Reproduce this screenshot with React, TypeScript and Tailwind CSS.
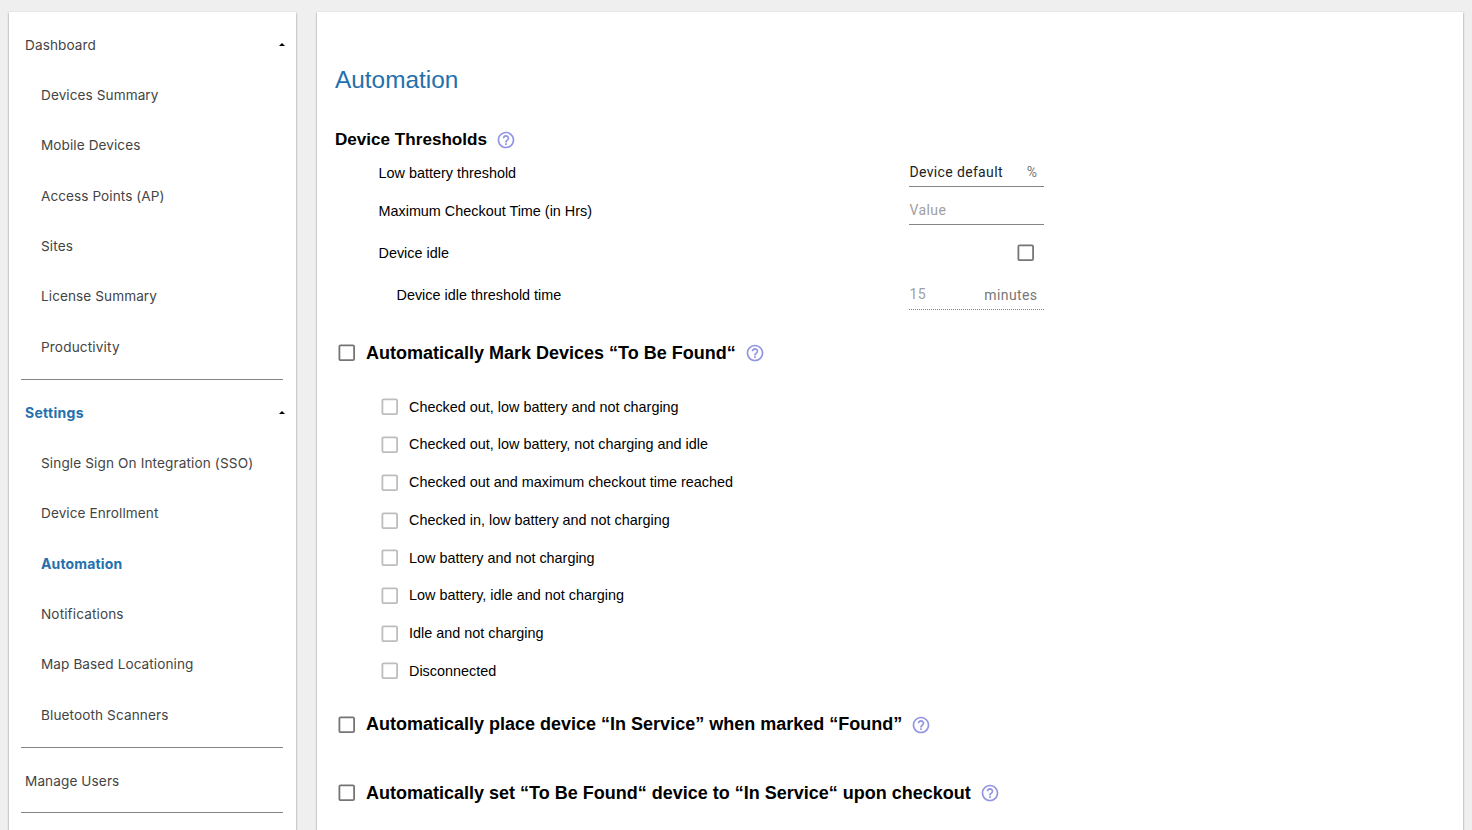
import type { ReactNode } from "react";
import { MdHelpOutline } from "react-icons/md";

type NavItem = { label: string; spacing: string; active?: boolean };

const dashboardItems: NavItem[] = [
  { label: "Devices Summary", spacing: "tracking-[0.08px]" },
  { label: "Mobile Devices", spacing: "tracking-[0.08px]" },
  { label: "Access Points (AP)", spacing: "tracking-[0.06px]" },
  { label: "Sites", spacing: "tracking-[0.1px]" },
  { label: "License Summary", spacing: "tracking-[0.08px]" },
  { label: "Productivity", spacing: "tracking-[0.15px]" },
];

const settingsItems: NavItem[] = [
  { label: "Single Sign On Integration (SSO)", spacing: "tracking-[0.12px]" },
  { label: "Device Enrollment", spacing: "tracking-[0.08px]" },
  { label: "Automation", spacing: "tracking-[0.15px]", active: true },
  { label: "Notifications", spacing: "tracking-[0.12px]" },
  { label: "Map Based Locationing", spacing: "tracking-[0.08px]" },
  { label: "Bluetooth Scanners", spacing: "tracking-[0.1px]" },
];

const conditions = [
  "Checked out, low battery and not charging",
  "Checked out, low battery, not charging and idle",
  "Checked out and maximum checkout time reached",
  "Checked in, low battery and not charging",
  "Low battery and not charging",
  "Low battery, idle and not charging",
  "Idle and not charging",
  "Disconnected",
];

function Caret() {
  return (
    <svg className="h-[3px] w-[6px]" viewBox="0 0 6 3">
      <path d="M3 0 6 3H0z" fill="#000" />
    </svg>
  );
}

function NavHeading({ label, active, open }: { label: string; active?: boolean; open?: boolean }) {
  return (
    <div
      className={`flex h-[50.3px] items-center justify-between pl-4 pr-[11px] ${
        active ? "text-[14px] font-bold leading-5 tracking-[0.3px] text-[#2470ad]" : "tracking-[0.1px]"
      }`}
    >
      <span>{label}</span>
      {open && <Caret />}
    </div>
  );
}

function NavList({ items }: { items: NavItem[] }) {
  return (
    <ul>
      {items.map((item) => (
        <li
          key={item.label}
          className={`flex h-[50.33px] items-center pl-8 ${item.spacing} ${
            item.active ? "pt-px text-[14px] font-bold leading-5 text-[#2470ad]" : ""
          }`}
        >
          {item.label}
        </li>
      ))}
    </ul>
  );
}

function Divider({ className }: { className: string }) {
  return <div className={`ml-3 h-px w-[262px] bg-[#858585] ${className}`} />;
}

function Checkbox({ muted }: { muted?: boolean }) {
  return (
    <svg className="h-[18px] w-[18px] shrink-0" viewBox="0 0 18 18">
      <rect
        x="1.4"
        y="1.4"
        width="14.7"
        height="14.7"
        rx="1.2"
        fill="none"
        stroke={muted ? "#bdbdbd" : "#757575"}
        strokeWidth="1.8"
      />
    </svg>
  );
}

function Help() {
  return <MdHelpOutline className="h-5 w-5 shrink-0 text-[#9094e2]" />;
}

function SettingRow({ label, className, children }: { label: string; className: string; children: ReactNode }) {
  return (
    <div className={`flex justify-between ${className}`}>
      <span className="leading-5">{label}</span>
      <div className="w-[135px] font-[Roboto,sans-serif] text-[14px]">{children}</div>
    </div>
  );
}

function AutomationToggle({ label, className }: { label: string; className: string }) {
  return (
    <div className={`flex h-6 items-center pl-[21px] ${className}`}>
      <Checkbox />
      <h2 className="ml-[10px] mr-[9px] text-[18px] font-bold">{label}</h2>
      <Help />
    </div>
  );
}

export default function App() {
  return (
    <div className="flex h-[830px] gap-[21px] overflow-hidden bg-[#efefef] pl-[9px] pt-3">
      <nav className="h-[860px] w-[287px] shrink-0 bg-white pt-[7.6px] font-[Inter,sans-serif] text-[13.6px] leading-5 text-[#444] shadow-[0_1px_2px_rgba(0,0,0,0.45)]">
        <NavHeading label="Dashboard" open />
        <NavList items={dashboardItems} />
        <Divider className="mb-[7.4px] mt-[7.2px]" />
        <NavHeading label="Settings" active open />
        <NavList items={settingsItems} />
        <Divider className="mb-[8px] mt-[7.2px]" />
        <NavHeading label="Manage Users" />
        <Divider className="mt-[5.7px]" />
      </nav>

      <main className="h-[860px] w-[1146px] shrink-0 bg-white font-['Liberation_Sans',Arial,sans-serif] text-[14.4px] text-black shadow-[0_1px_2px_rgba(0,0,0,0.45)]">
        <h1 className="pl-[18px] pt-[52px] text-[24.4px] leading-8 text-[#2470ad]">Automation</h1>

        <div className="mt-8 flex h-6 items-center pl-[18px]">
          <h2 className="mr-[9px] text-[17.1px] font-bold">Device Thresholds</h2>
          <Help />
        </div>

        <section className="ml-[61.5px] w-[665.5px] pt-[11px]">
          <SettingRow label="Low battery threshold" className="h-[38px]">
            <div className="flex h-6 items-start justify-between border-b border-[#858585] pl-[0.5px] pr-[7px] leading-[18px]">
              <span className="tracking-[0.35px] text-[#222]">Device default</span>
              <span className="text-[#777]">%</span>
            </div>
          </SettingRow>
          <SettingRow label="Maximum Checkout Time (in Hrs)" className="h-[42px]">
            <div className="h-6 border-b border-[#858585] pl-[0.5px] leading-[18px] tracking-[0.4px] text-[#a0a0a0]">Value</div>
          </SettingRow>
          <SettingRow label="Device idle" className="h-[42px]">
            <div className="flex h-5 items-center justify-end pr-[9px]">
              <Checkbox />
            </div>
          </SettingRow>
          <SettingRow label="Device idle threshold time" className="h-[42px] pl-[18px]">
            <div className="flex h-[25px] items-start justify-between border-b border-dotted border-[#858585] pl-[0.5px] pr-[6.5px] tracking-[0.4px]">
              <span className="leading-[18px] text-[#a0a0a0]">15</span>
              <span className="leading-5 text-[#777]">minutes</span>
            </div>
          </SettingRow>
        </section>

        <AutomationToggle className="mt-[14px]" label="Automatically Mark Devices “To Be Found“" />

        <ul className="pl-[64px] pt-[23.6px]">
          {conditions.map((condition) => (
            <li key={condition} className="flex h-[37.72px] items-center gap-[10px]">
              <Checkbox muted />
              <span>{condition}</span>
            </li>
          ))}
        </ul>

        <AutomationToggle className="mt-[22.2px]" label="Automatically place device “In Service” when marked “Found”" />
        <AutomationToggle className="mt-[44.8px]" label="Automatically set “To Be Found“ device to “In Service“ upon checkout" />
      </main>
    </div>
  );
}
